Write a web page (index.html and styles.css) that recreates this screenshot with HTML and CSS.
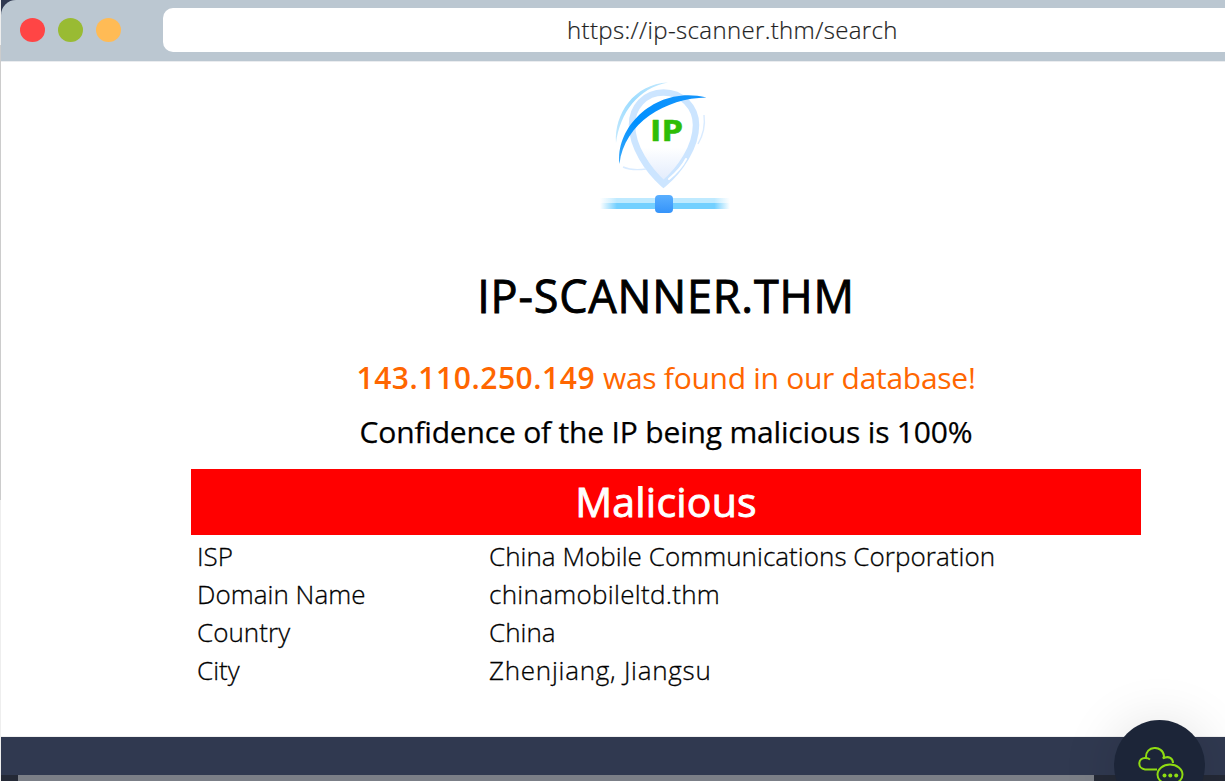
FILE: index.html
```html
<!DOCTYPE html>
<html lang="en">
<head>
<meta charset="utf-8">
<title>IP-SCANNER.THM</title>
<link rel="stylesheet" href="styles.css">
</head>
<body>
<div class="desk">
  <div class="edge"></div>
  <div class="window">
    <header class="bar">
      <div class="lights"><i class="light red"></i><i class="light green"></i><i class="light amber"></i></div>
      <div class="address"><span class="url">https://ip-scanner.thm/search</span></div>
    </header>
    <main class="page">
      <svg class="logo" width="132" height="140" viewBox="0 0 132 140">
        <defs>
          <linearGradient id="pin" x1="0" y1="0" x2="0" y2="1"><stop offset=".6" stop-color="#fff"/><stop offset="1" stop-color="#dfeafc"/></linearGradient>
          <linearGradient id="arc" x1="0" y1="1" x2="1" y2="0"><stop offset="0" stop-color="#3aa9fb"/><stop offset=".4" stop-color="#0090ff"/><stop offset="1" stop-color="#1695fb"/></linearGradient>
          <linearGradient id="thin" x1="0" y1="1" x2="1" y2="0"><stop offset="0" stop-color="#c4e9fd"/><stop offset=".5" stop-color="#9ddcff"/><stop offset="1" stop-color="#c4e9fd"/></linearGradient>
          <linearGradient id="wire"><stop offset="0" stop-color="#73d0ff" stop-opacity="0"/><stop offset=".13" stop-color="#73d0ff"/><stop offset=".88" stop-color="#73d0ff"/><stop offset="1" stop-color="#73d0ff" stop-opacity="0"/></linearGradient>
          <linearGradient id="wirelight"><stop offset="0" stop-color="#c7ecfe" stop-opacity="0"/><stop offset=".13" stop-color="#bfeaff"/><stop offset=".88" stop-color="#bfeaff"/><stop offset="1" stop-color="#c7ecfe" stop-opacity="0"/></linearGradient>
          <linearGradient id="node" x1="0" y1="0" x2="0" y2="1"><stop offset="0" stop-color="#5aafff"/><stop offset="1" stop-color="#3594fa"/></linearGradient>
        </defs>
        <path d="M63.500 12.500C45 12.500 32 27 32 45C32 67 48 90 63.500 104C80 90 96 67 96 45C96 27 82 12.500 63.500 12.500Z" fill="url(#pin)" stroke="#cce5ff" stroke-width="6.500"/>
        <path d="M69 99Q81 89 86 79" fill="none" stroke="#fff" stroke-width="2" stroke-linecap="round"/>
        <path d="M16 63C14 34 34 4 68 2.500C38 8 20 33 16 63Z" fill="url(#thin)"/>
        <path d="M23 87Q32 91 46 89M104 35Q106 50 98 64" fill="none" stroke="#d9ebff" stroke-width="1.400"/>
        <path d="M19.500 84C15 45 58 5 106.500 17.500C66 18 24 43 19.500 84Z" fill="url(#arc)"/>
        <text class="logo-text" x="50" y="61" textLength="33" lengthAdjust="spacingAndGlyphs">IP</text>
        <path d="M0 118H130V123H0Z" fill="url(#wirelight)"/>
        <path d="M0 123H130V129H0Z" fill="url(#wire)"/>
        <rect x="55" y="115" width="18" height="18" rx="4" fill="url(#node)"/>
      </svg>
      <h1 class="title">IP-SCANNER.THM</h1>
      <p class="found"><b class="ip">143.110.250.149</b> <span class="foundtext">was found in our database!</span></p>
      <p class="confidence">Confidence of the IP being malicious is 100%</p>
      <section class="report">
        <h2 class="verdict">Malicious</h2>
        <dl class="facts">
          <dt>ISP</dt><dd>China Mobile Communications Corporation</dd>
          <dt>Domain Name</dt><dd class="domain">chinamobileltd.thm</dd>
          <dt>Country</dt><dd>China</dd>
          <dt>City</dt><dd class="place">Zhenjiang, Jiangsu</dd>
        </dl>
      </section>
    </main>
  </div>
  <footer class="foot"><div class="scroll"><i class="arrow left"></i><i class="thumb"></i><i class="arrow right"></i></div></footer>
  <div class="chat">
    <svg width="46" height="40" viewBox="0 0 46 40" fill="none" stroke="#8fdb12" stroke-width="2">
      <path d="M19 22.500H7C-1 21.500-.5 10 8 11C7 -2 25 -2 26 9Q26 10 25 11.500C31 8 35 12 35 16"/>
      <path d="M8 11Q10 11 12 12.500"/>
      <ellipse cx="32" cy="27.500" rx="12.500" ry="10"/>
      <g fill="#8fdb12" stroke="none"><circle cx="26.500" cy="28.500" r="2"/><circle cx="32.300" cy="28.500" r="2"/><circle cx="38.200" cy="28.500" r="2"/></g>
    </svg>
  </div>
</div>
</body>
</html>
```
FILE: styles.css
```css
* { box-sizing: border-box; margin: 0; padding: 0; }
body { width: 1225px; height: 781px; overflow: hidden; font-family: "Open Sans", "Noto Sans", sans-serif; color: #000; }
.desk { position: relative; width: 1225px; height: 781px; overflow: hidden; display: grid; grid-template-columns: 1px 1330px; grid-template-rows: 737px 44px; background: #eee; }
.edge { background: linear-gradient(#eee 45px, #ccc 45px, #ccc 500px, #eee 500px); }
.window { background: #303950; border-bottom: 1px solid #f0f0f0; }
.bar { height: 61px; background: #bbc7d1; border-radius: 15px 0 0 0; display: flex; align-items: center; padding: 0 0 1px 19px; }
.lights { display: flex; gap: 13px; width: 143px; }
.light { width: 25px; height: 24px; border-radius: 50%; }
.red { background: #ff4545; }
.green { background: #9b3; }
.amber { background: #fb5; }
.address { width: 1138px; height: 44px; border-radius: 10px; background: #fff; display: flex; align-items: center; padding-left: 404px; }
.url { font-size: 24px; line-height: 44px; font-weight: 300; letter-spacing: .35px; color: #222; white-space: nowrap; -webkit-text-stroke: .2px #222; }
.page { height: 675px; background: #fff; border-top: 1px solid #eaecef; display: flex; flex-direction: column; align-items: center; }
.logo { margin: 18px 0 0; flex: none; }
.logo-text { font: 700 29px "Open Sans", sans-serif; fill: #2fbd06; stroke: #2fbd06; stroke-width: .6px; stroke-linejoin: round; }
.title { font-size: 45px; font-weight: 400; line-height: 60px; margin-top: 46px; letter-spacing: .8px; -webkit-text-stroke: .9px #000; }
.found { color: #f60; font-size: 30px; line-height: 40px; margin-top: 32px; white-space: nowrap; }
.ip { font-weight: 600; letter-spacing: .55px; }
.foundtext { letter-spacing: -.28px; }
.confidence { font-size: 30px; line-height: 40px; margin-top: 14px; white-space: nowrap; letter-spacing: -.18px; -webkit-text-stroke: .25px #000; }
.report { width: 950px; margin-top: 17px; }
.verdict { background: #f00; color: #fff; height: 66px; line-height: 65px; font-size: 41px; font-weight: 400; letter-spacing: .2px; text-align: center; -webkit-text-stroke: .9px #fff; }
.facts { display: grid; grid-template-columns: 292px 1fr; grid-auto-rows: 38px; padding: 2px 6px; font-size: 26px; font-weight: 300; line-height: 38px; letter-spacing: .04px; white-space: nowrap; -webkit-text-stroke: .3px #000; }
.domain { letter-spacing: .3px; }
.place { letter-spacing: .75px; }
.foot { grid-column: 2; background: #303950; padding-top: 38px; }
.scroll { display: flex; width: 1224px; height: 6px; background: #242936; }
.arrow { width: 17px; }
.thumb { width: 1076px; background: #7b7f87; }
.chat { position: absolute; left: 1114px; top: 720px; width: 91px; height: 91px; border-radius: 50%; background: #1c2538; box-shadow: 0 4px 55px rgba(0,0,0,.13); padding: 27px 0 0 24px; }
```
